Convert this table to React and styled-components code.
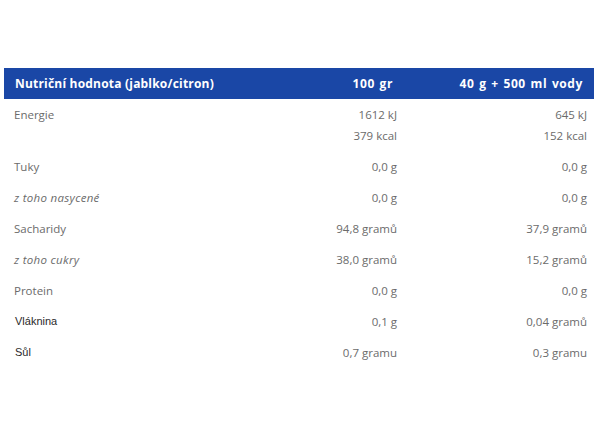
import React from "react";
import styled, { createGlobalStyle } from "styled-components";

const Global = createGlobalStyle`
  html, body { margin: 0; padding: 0; background: #fff; }
  body { font-family: "Open Sans", "Liberation Sans", sans-serif; }
`;

const Page = styled.div`
  width: 600px;
  height: 440px;
  padding: 68px 6px 0 4px;
  box-sizing: border-box;
`;

const Table = styled.div`
  display: grid;
  grid-template-columns: 1fr 190px 190px;
`;

const HeadCell = styled.div`
  background: #1a47a6;
  color: #fff;
  font-weight: 700;
  font-size: 12px;
  height: 31px;
  white-space: nowrap;
  display: flex;
  align-items: center;
  justify-content: ${(p) => (p.$right ? "flex-end" : "flex-start")};
  padding: ${(p) => (p.$right ? "0 11px 0 0" : "0 0 0 11px")};
  letter-spacing: ${(p) => (p.$wide ? "0.6px" : "0.2px")};
  word-spacing: ${(p) => (p.$wide ? "1px" : "0")};
`;

const Cell = styled.div`
  padding: 5px ${(p) => (p.$right ? "7px" : "0")} 5px ${(p) => (p.$right ? "0" : p.$dark ? "11px" : "10px")};
  text-align: ${(p) => (p.$right ? "right" : "left")};
  line-height: 21px;
  white-space: nowrap;
  color: ${(p) => (p.$dark ? "#2a2a2a" : "#6b6b6b")};
  font-style: ${(p) => (p.$italic ? "italic" : "normal")};
  font-family: ${(p) => (p.$dark ? '"Liberation Sans", Arial, sans-serif' : "inherit")};
  font-size: ${(p) => (p.$dark ? "11px" : "11.5px")};
  letter-spacing: ${(p) => (p.$italic ? "0.3px" : "0")};
`;

const Line = styled.div``;

const rows = [
  { label: "Energie", a: ["1612 kJ", "379 kcal"], b: ["645 kJ", "152 kcal"] },
  { label: "Tuky", a: ["0,0 g"], b: ["0,0 g"] },
  { label: "z toho nasycené", italic: true, a: ["0,0 g"], b: ["0,0 g"] },
  { label: "Sacharidy", a: ["94,8 gramů"], b: ["37,9 gramů"] },
  { label: "z toho cukry", italic: true, a: ["38,0 gramů"], b: ["15,2 gramů"] },
  { label: "Protein", a: ["0,0 g"], b: ["0,0 g"] },
  { label: "Vláknina", dark: true, a: ["0,1 g"], b: ["0,04 gramů"] },
  { label: "Sůl", dark: true, a: ["0,7 gramu"], b: ["0,3 gramu"] },
];

export default function App() {
  return (
    <Page>
      <Global />
      <Table>
        <HeadCell>Nutriční hodnota (jablko/citron)</HeadCell>
        <HeadCell $right $wide>100 gr</HeadCell>
        <HeadCell $right $wide>40 g + 500 ml vody</HeadCell>
        {rows.map((r) => (
          <React.Fragment key={r.label}>
            <Cell $italic={r.italic} $dark={r.dark}>{r.label}</Cell>
            <Cell $right>
              {r.a.map((v) => (
                <Line key={v}>{v}</Line>
              ))}
            </Cell>
            <Cell $right>
              {r.b.map((v) => (
                <Line key={v}>{v}</Line>
              ))}
            </Cell>
          </React.Fragment>
        ))}
      </Table>
    </Page>
  );
}
